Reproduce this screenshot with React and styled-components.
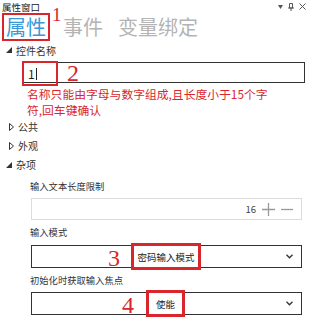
import React from "react";
import styled, { createGlobalStyle } from "styled-components";

const GlobalStyle = createGlobalStyle`
    html, body {
        margin: 0;
        padding: 0;
        background: #fff;
    }
    body {
        font-family: "Noto Sans CJK SC", "Noto Sans", sans-serif;
        color: #333;
    }
`;

const RED = "#d8262c";

const Panel = styled.div`
    width: 311px;
    height: 319px;
    position: relative;
    overflow: hidden;
    background: #fff;
`;

const TitleBar = styled.div`
    height: 13px;
    display: flex;
    align-items: center;
    justify-content: space-between;
    padding: 0 5px 0 2px;
    font-size: 9.5px;
    color: #222;
    .tools {
        display: flex;
        align-items: center;
        gap: 5px;
        color: #555;
    }
`;

const TabsRow = styled.div`
    height: 28px;
    display: flex;
    align-items: center;
    gap: 7px;
    padding-left: 2px;
    position: relative;
`;

const Tab = styled.div`
    font-size: 20px;
    line-height: 24px;
    color: ${(p) => (p.$active ? "#3b98d6" : "#b4b4b4")};
    padding: 0 2px;
    height: 24px;
    display: flex;
    align-items: center;
    border: 2px solid ${(p) => (p.$active ? RED : "transparent")};
    margin-right: ${(p) => (p.$active ? "2px" : "0")};
`;

const Mark = styled.span`
    position: absolute;
    font-family: "Liberation Serif", serif;
    color: ${RED};
    font-size: ${(p) => p.$size || 22}px;
    line-height: 1;
`;

const Head = styled.div`
    height: ${(p) => p.$h || 19}px;
    display: flex;
    align-items: center;
    gap: 4px;
    padding-left: ${(p) => (p.$open ? 6 : 9)}px;
    font-size: 10px;
    color: #333;
`;

const NameRow = styled.div`
    margin: 3px 6px 0 22px;
    height: 21px;
    border: 1px solid #333;
    box-sizing: border-box;
    position: relative;
`;

const NameBox = styled.div`
    position: absolute;
    left: -1px;
    top: -2px;
    width: 36px;
    height: 25px;
    box-sizing: border-box;
    border: 2px solid ${RED};
    display: flex;
    align-items: center;
    padding-left: 4px;
    font-size: 12px;
    color: #222;
    .caret {
        width: 1px;
        height: 12px;
        background: #222;
        margin-left: 1px;
    }
`;

const Hint = styled.div`
    margin-top: 3px;
    padding-left: 27px;
    font-size: 11.8px;
    line-height: 15.5px;
    color: ${RED};
    white-space: nowrap;
`;

const Label = styled.div`
    margin-top: 3px;
    height: 18px;
    padding-left: 30px;
    display: flex;
    align-items: center;
    font-size: 9.3px;
    color: #333;
`;

const Field = styled.div`
    margin: ${(p) => p.$mt || 3}px 9px 0 31px;
    height: ${(p) => p.$h || 23}px;
    box-sizing: border-box;
    border: 1px solid ${(p) => (p.$light ? "#dcdcdc" : "#333")};
    position: relative;
    display: flex;
    align-items: center;
    justify-content: flex-end;
    padding-right: 8px;
    gap: 6px;
    font-size: 9.5px;
    color: #444;
`;

const OptionBox = styled.div`
    position: absolute;
    top: -3px;
    height: 27px;
    box-sizing: border-box;
    border: 3px solid ${RED};
    display: flex;
    align-items: center;
    justify-content: center;
    font-size: 9.5px;
    color: #222;
`;

const Stepper = styled.span`
    color: #888;
    font-size: 10px;
    display: flex;
    align-items: center;
`;

function Triangle({ open }) {
    return open ? (
        <svg width="6" height="6" viewBox="0 0 6 6">
            <path d="M6 0 L6 6 L0 6 Z" fill="#333" />
        </svg>
    ) : (
        <svg width="5" height="8" viewBox="0 0 5 8">
            <path d="M0.5 0.5 L4.5 4 L0.5 7.5 Z" fill="none" stroke="#333" />
        </svg>
    );
}

function Chevron() {
    return (
        <svg width="7" height="5" viewBox="0 0 7 5">
            <path d="M0.5 0.8 L3.5 3.8 L6.5 0.8" fill="none" stroke="#333" strokeWidth="1.3" />
        </svg>
    );
}

function Select({ mark, markLeft, boxLeft, boxWidth, value, mt }) {
    return (
        <Field $mt={mt}>
            <Mark $size={24} style={{ left: markLeft, top: 0 }}>
                {mark}
            </Mark>
            <OptionBox style={{ left: boxLeft, width: boxWidth }}>{value}</OptionBox>
            <Chevron />
        </Field>
    );
}

export default function App() {
    return (
        <Panel>
            <GlobalStyle />
            <TitleBar>
                <span>属性窗口</span>
                <span className="tools">
                    <svg width="5" height="4" viewBox="0 0 5 4">
                        <path d="M0 0 L5 0 L2.5 4 Z" fill="#555" />
                    </svg>
                    <svg width="6" height="8" viewBox="0 0 6 8">
                        <path d="M1.5 0.5 H4.5 V5 H1.5 Z M0 5 H6 M3 5 V8" fill="none" stroke="#555" />
                    </svg>
                    <svg width="7" height="7" viewBox="0 0 7 7">
                        <path d="M0.5 0.5 L6.5 6.5 M6.5 0.5 L0.5 6.5" stroke="#555" />
                    </svg>
                </span>
            </TitleBar>
            <TabsRow>
                <Tab $active>属性</Tab>
                <Mark $size={19} style={{ left: 52, top: -8 }}>
                    1
                </Mark>
                <Tab>事件</Tab>
                <Tab>变量绑定</Tab>
            </TabsRow>
            <Head $open $h={18}>
                <Triangle open />
                控件名称
            </Head>
            <NameRow>
                <NameBox>
                    1<span className="caret" />
                </NameBox>
                <Mark $size={24} style={{ left: 44, top: -2 }}>
                    2
                </Mark>
            </NameRow>
            <Hint>
                名称只能由字母与数字组成,且长度小于15个字
                <br />
                符,回车键确认
            </Hint>
            <Head>
                <Triangle />
                公共
            </Head>
            <Head>
                <Triangle />
                外观
            </Head>
            <Head $open>
                <Triangle open />
                杂项
            </Head>
            <Label>输入文本长度限制</Label>
            <Field $light $h={22}>
                <span>16</span>
                <Stepper>
                    <svg width="13" height="13" viewBox="0 0 13 13">
                        <path d="M6.5 0 V13 M0 6.5 H13" stroke="#999" strokeWidth="1.3" />
                    </svg>
                </Stepper>
                <Stepper>
                    <svg width="12" height="13" viewBox="0 0 12 13">
                        <path d="M0 6.5 H12" stroke="#999" strokeWidth="1.3" />
                    </svg>
                </Stepper>
            </Field>
            <Label>输入模式</Label>
            <Select mt={4} mark="3" markLeft={76} boxLeft={99} boxWidth={70} value="密码输入模式" />
            <Label>初始化时获取输入焦点</Label>
            <Select mark="4" markLeft={90} boxLeft={114} boxWidth={39} value="使能" />
        </Panel>
    );
}
